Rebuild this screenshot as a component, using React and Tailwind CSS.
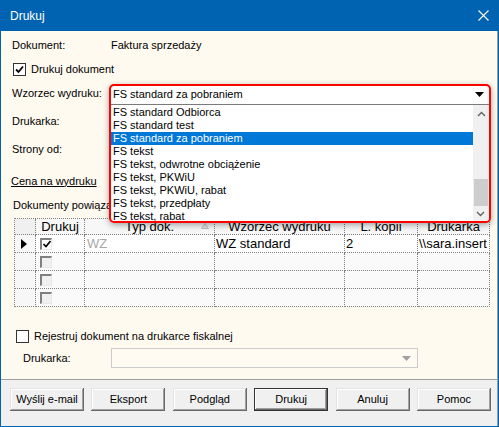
import React from 'react';

const items = [
  'FS standard Odbiorca',
  'FS standard test',
  'FS standard za pobraniem',
  'FS tekst',
  'FS tekst, odwrotne obciążenie',
  'FS tekst, PKWiU',
  'FS tekst, PKWiU, rabat',
  'FS tekst, przedpłaty',
  'FS tekst, rabat',
];

function Check({ checked }) {
  return (
    <div className="w-[13px] h-[13px] border border-[#333] bg-white flex items-center justify-center">
      {checked && (
        <svg width="9" height="9" viewBox="0 0 9 9">
          <path d="M1 4.5 L3.5 7 L8 1.5" stroke="#000" strokeWidth="1.8" fill="none" />
        </svg>
      )}
    </div>
  );
}

function GridCheck({ checked }) {
  return (
    <div className={`w-[12px] h-[12px] border-t-2 border-l-2 border-[#808080] border-r border-b border-r-[#e8e8e8] border-b-[#e8e8e8] flex items-center justify-center ${checked ? 'bg-white' : 'bg-[#f0f0f0]'}`}>
      {checked && (
        <svg width="8" height="8" viewBox="0 0 8 8">
          <path d="M0.5 4 L3 6.5 L7.5 1" stroke="#000" strokeWidth="1.6" fill="none" />
        </svg>
      )}
    </div>
  );
}

function Btn({ children, def }) {
  return (
    <button
      className={`w-[74px] h-[23px] bg-[#f0f0f0] text-[11px] text-black flex items-center justify-center ${
        def
          ? 'border border-[#333] shadow-[inset_-1px_-1px_#696969,inset_1px_1px_#fff,inset_-2px_-2px_#a0a0a0]'
          : 'shadow-[inset_-1px_-1px_#696969,inset_1px_1px_#e3e3e3,inset_-2px_-2px_#a0a0a0,inset_2px_2px_#fff]'
      }`}
    >
      {children}
    </button>
  );
}

const cell = 'border-r border-b border-dotted border-[#808080] h-[18px] flex items-center overflow-hidden whitespace-nowrap';

export default function App() {
  const rows = [0, 1, 2, 3];
  return (
    <div className="w-[499px] h-[427px] bg-[#0063b1] flex flex-col [font-family:'Liberation_Sans',Arial,sans-serif] text-[11px] text-black overflow-hidden">
      {/* Title bar */}
      <div className="h-[31px] flex items-center justify-between pl-[10px] pr-[10px] text-white text-[12px]">
        <span>Drukuj</span>
        <svg width="11" height="11" viewBox="0 0 11 11">
          <path d="M0.5 0.5 L10.5 10.5 M10.5 0.5 L0.5 10.5" stroke="#fff" strokeWidth="1.1" />
        </svg>
      </div>

      <div className="flex-1 ml-[1px] mr-[1px] mb-[1px] flex flex-col border-r border-[#9a9a9a]">
        {/* Content */}
        <div className="h-[349px] bg-[#fffaf0] border-b border-[#a0a0a0] flex flex-col pl-[11px] pt-[5px]">
          <div className="h-[18px] flex items-center">
            <span className="w-[99px]">Dokument:</span>
            <span>Faktura sprzedaży</span>
          </div>
          <div className="h-[18px] mt-[6px] flex items-center gap-[5px] pl-[1px]">
            <Check checked />
            <span>Drukuj dokument</span>
          </div>

          {/* Wzorzec wydruku */}
          <div className="h-[18px] mt-[6px] flex items-center relative z-10">
            <span className="w-[99px] pt-[1px]">Wzorzec wydruku:</span>
            <div className="relative w-[378px] h-[18px]">
              <div className="absolute left-[-2px] top-0 w-[382px] h-[139px] border-2 border-[#ff0000] rounded-[5px] shadow-[0_2px_6px_rgba(0,0,0,0.35)] bg-white flex flex-col overflow-hidden">
                <div className="h-[19px] shrink-0 flex items-center justify-between pl-[2px] pr-[5px] pb-[1px] border-b border-[#7a7a7a]">
                  <span>FS standard za pobraniem</span>
                  <svg width="9" height="5" viewBox="0 0 9 5">
                    <path d="M0 0 H9 L4.5 5 Z" fill="#000" />
                  </svg>
                </div>
                <div className="flex flex-1 min-h-0 relative">
                  <div className="flex-1 pt-[1px] flex flex-col">
                    {items.map((t, i) => (
                      <div
                        key={t}
                        className={`h-[13px] leading-[13px] pl-[2px] whitespace-nowrap shrink-0 ${
                          i === 2 ? 'bg-[#0078d7] text-white' : ''
                        }`}
                      >
                        {t}
                      </div>
                    ))}
                  </div>
                  <div className="w-[16px] bg-[#f0f0f0] flex flex-col items-center">
                    <svg width="9" height="6" viewBox="0 0 9 6" className="mt-[6px]">
                      <path d="M1 5 L4.5 1.5 L8 5" stroke="#606060" strokeWidth="1.3" fill="none" />
                    </svg>
                    <div className="flex-1 w-full flex flex-col justify-end pb-[15px]">
                      <div className="h-[27px] w-[14px] mx-auto bg-[#cdcdcd]" />
                    </div>
                    <svg width="9" height="6" viewBox="0 0 9 6" className="absolute bottom-[4px] right-[4px]">
                      <path d="M1 1 L4.5 4.5 L8 1" stroke="#606060" strokeWidth="1.3" fill="none" />
                    </svg>
                  </div>
                </div>
              </div>
            </div>
          </div>

          <div className="h-[18px] mt-[10px] flex items-center">Drukarka:</div>
          <div className="h-[18px] mt-[10px] flex items-center">Strony od:</div>
          <div className="h-[18px] mt-[14px] flex items-center -ml-[1px]">
            <span className="underline">Cena na wydruku</span>
          </div>
          <div className="h-[18px] mt-[6px] flex items-center pl-[1px]">Dokumenty powiązane</div>

          {/* Grid */}
          <div className="mt-[4px] ml-[2px] w-[476px] border-t border-l border-dotted border-[#808080] text-[13px] grid grid-cols-[21px_49px_130px_130px_73px_72px]">
            <div className={`${cell} !h-[16px] bg-[#f0f0f0]`} />
            <div className={`${cell} !h-[16px] bg-[#f7f7f7] justify-center`}>Drukuj</div>
            <div className={`${cell} !h-[16px] bg-[#f7f7f7] justify-center relative`}>
              Typ dok.
              <svg width="8" height="6" viewBox="0 0 8 6" className="absolute right-[5px] top-[4px]">
                <path d="M0.5 5.5 L4 0.5 L7.5 5.5 Z" fill="#e4e4e4" stroke="#b0b0b0" strokeWidth="0.8" />
              </svg>
            </div>
            <div className={`${cell} !h-[16px] bg-[#f7f7f7] justify-center`}>Wzorzec wydruku</div>
            <div className={`${cell} !h-[16px] bg-[#f7f7f7] justify-center`}>L. kopii</div>
            <div className={`${cell} !h-[16px] bg-[#f7f7f7] justify-center`}>Drukarka</div>
            {rows.map((r) => (
              <React.Fragment key={r}>
                <div className={`${cell} bg-[#f7f7f7] pl-[6px]`}>
                  {r === 0 && (
                    <svg width="6" height="10" viewBox="0 0 6 10">
                      <path d="M0 0 L6 5 L0 10 Z" fill="#000" />
                    </svg>
                  )}
                </div>
                <div className={`${cell} ${r === 0 ? 'bg-white' : 'bg-[#fafafa]'} pl-[4px]`}>
                  <GridCheck checked={r === 0} />
                </div>
                <div className={`${cell} ${r === 0 ? 'bg-white' : 'bg-[#fafafa]'} pl-[2px] text-[#a8a8a8]`}>{r === 0 ? 'WZ' : ''}</div>
                <div className={`${cell} ${r === 0 ? 'bg-white' : 'bg-[#fafafa]'} pl-[1px]`}>{r === 0 ? 'WZ standard' : ''}</div>
                <div className={`${cell} ${r === 0 ? 'bg-white' : 'bg-[#fafafa]'} pl-[1px]`}>{r === 0 ? '2' : ''}</div>
                <div className={`${cell} ${r === 0 ? 'bg-white' : 'bg-[#fafafa]'} pl-[1px]`}>{r === 0 ? '\\\\sara.insert' : ''}</div>
              </React.Fragment>
            ))}
          </div>

          <div className="h-[18px] mt-[20px] flex items-center gap-[5px] pl-[4px]">
            <Check />
            <span>Rejestruj dokument na drukarce fiskalnej</span>
          </div>
          <div className="h-[20px] mt-[3px] flex items-center pl-[11px]">
            <span className="w-[88px]">Drukarka:</span>
            <div className="w-[307px] h-[20px] border border-[#cccccc] bg-[#fffaf2] flex items-center justify-end pr-[6px]">
              <svg width="9" height="5" viewBox="0 0 9 5">
                <path d="M0 0 H9 L4.5 5 Z" fill="#a0a0a0" />
              </svg>
            </div>
          </div>
        </div>

        {/* Buttons */}
        <div className="flex-1 bg-[#f0f0f0] flex justify-between items-start pt-[8px] pl-[9px] pr-[6px]">
          <Btn>Wyślij e-mail</Btn>
          <Btn>Eksport</Btn>
          <Btn>Podgląd</Btn>
          <Btn def>Drukuj</Btn>
          <Btn>Anuluj</Btn>
          <Btn>Pomoc</Btn>
        </div>
      </div>
    </div>
  );
}
